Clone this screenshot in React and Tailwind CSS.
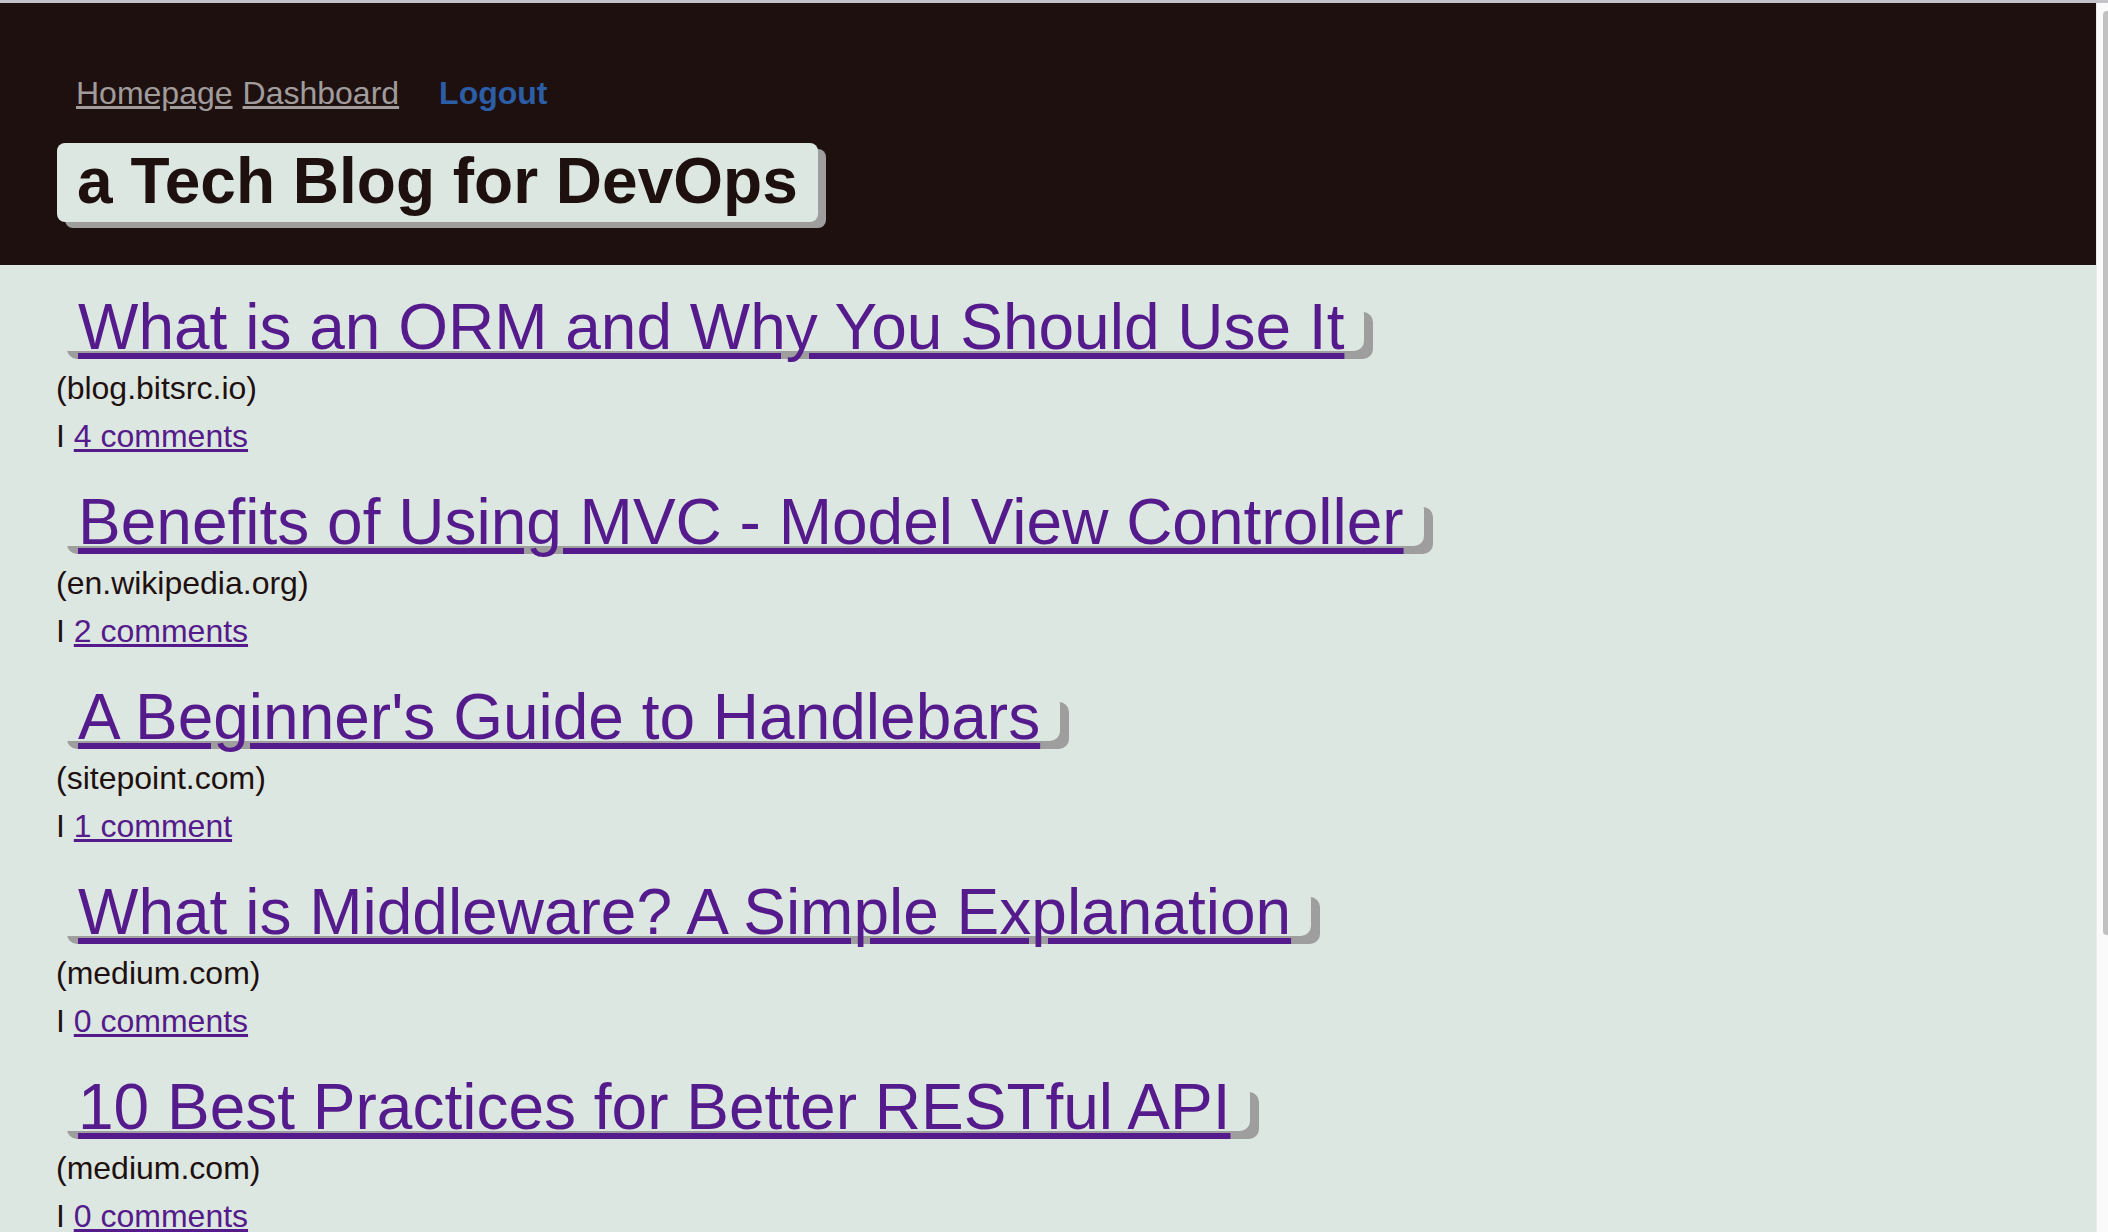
const posts = [
  { title: "What is an ORM and Why You Should Use It", source: "blog.bitsrc.io", comments: "4 comments" },
  { title: "Benefits of Using MVC - Model View Controller", source: "en.wikipedia.org", comments: "2 comments" },
  { title: "A Beginner's Guide to Handlebars", source: "sitepoint.com", comments: "1 comment" },
  { title: "What is Middleware? A Simple Explanation", source: "medium.com", comments: "0 comments" },
  { title: "10 Best Practices for Better RESTful API", source: "medium.com", comments: "0 comments" },
];

function Post({ post }) {
  return (
    <div>
      <a
        href="#"
        className="block w-fit ml-[2px] px-[20px] text-[64px] leading-[47px] rounded-[10px] shadow-[9px_8px_0_#9e9e9e] text-[#551a8b] underline whitespace-nowrap"
      >
        {post.title}
      </a>
      <p className="mt-[19px] text-[32px] leading-[37px]">({post.source})</p>
      <p className="mt-[11px] text-[32px] leading-[37px]">
        I{" "}
        <a href="#" className="text-[#551a8b] underline">
          {post.comments}
        </a>
      </p>
    </div>
  );
}

export default function App() {
  return (
    <div
      className="h-[1232px] flex flex-col overflow-hidden text-[#1f1010]"
      style={{ fontFamily: '"Liberation Sans", Arial, sans-serif' }}
    >
      <div className="h-[3px] bg-[#c3c3ca] shrink-0"></div>
      <div className="flex flex-1 min-h-0">
        <div className="flex-1 min-w-0 bg-[#dde7e1]">
          <header className="bg-[#1f1010] pt-[72px] pb-[43px] px-[57px]">
            <nav className="flex items-baseline ml-[19px] text-[32px] leading-[37px]">
              <a href="#" className="text-[#a19c9c] underline">Homepage</a>
              <a href="#" className="ml-[10px] text-[#a19c9c] underline">Dashboard</a>
              <a href="#" className="ml-[40px] font-bold text-[#2b5ea7]">Logout</a>
            </nav>
            <h1 className="mt-[31px] w-fit h-[79px] px-[20px] text-[64px] leading-[77px] font-bold bg-[#dde7e1] text-[#1f1010] rounded-lg shadow-[8px_6px_0_#9e9e9e]">
              a Tech Blog for DevOps
            </h1>
          </header>
          <main className="pt-[39px] pl-[56px] flex flex-col gap-[44px]">
            {posts.map((p, i) => (
              <Post key={i} post={p} />
            ))}
          </main>
        </div>
        <div className="w-[12px] shrink-0 bg-[#fafafa] border-l border-[#ebebeb]">
          <div className="mt-[8px] ml-[6px] w-[6px] h-[924px] bg-[#c1c1c1] rounded-l-[4px]"></div>
        </div>
      </div>
    </div>
  );
}
